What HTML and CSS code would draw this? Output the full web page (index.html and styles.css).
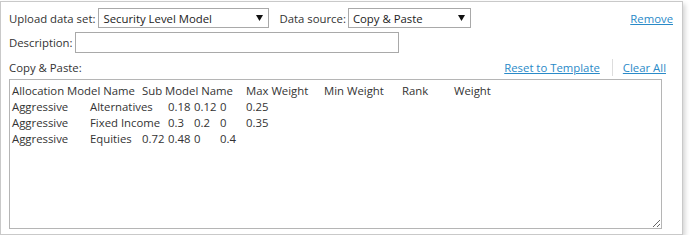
FILE: index.html
```html
<!DOCTYPE html>
<html>
<head>
<meta charset="utf-8">
<link rel="stylesheet" href="styles.css">
</head>
<body>
<div class="panel">
  <div class="row row1">
    <span class="label">Upload data set:</span>
    <div class="select sel1"><span class="sel-text">Security Level Model</span><svg class="arrow" width="7" height="6" viewBox="0 0 7 6"><path d="M0 0H7L3.5 6Z" fill="#111"/></svg></div>
    <span class="label lbl2">Data source:</span>
    <div class="select sel2"><span class="sel-text">Copy &amp; Paste</span><svg class="arrow" width="7" height="6" viewBox="0 0 7 6"><path d="M0 0H7L3.5 6Z" fill="#111"/></svg></div>
    <a class="link remove" href="#">Remove</a>
  </div>
  <div class="row row2">
    <span class="label">Description:</span>
    <div class="input"></div>
  </div>
  <div class="row row3">
    <span class="label">Copy &amp; Paste:</span>
    <div class="actions">
      <a class="link" href="#">Reset to Template</a>
      <span class="sep"></span>
      <a class="link" href="#">Clear All</a>
    </div>
  </div>
  <div class="textarea">
    <div class="line">
      <span class="s0">Allocation Model Name</span><span class="s5">Sub Model Name</span><span class="s9">Max Weight</span><span class="s12">Min Weight</span><span class="s15">Rank</span><span class="s17">Weight</span>
    </div>
    <div class="line">
      <span class="s0">Aggressive</span><span class="s3">Alternatives</span><span class="s6">0.18</span><span class="s7">0.12</span><span class="s8">0</span><span class="s9">0.25</span>
    </div>
    <div class="line">
      <span class="s0">Aggressive</span><span class="s3">Fixed Income</span><span class="s6">0.3</span><span class="s7">0.2</span><span class="s8">0</span><span class="s9">0.35</span>
    </div>
    <div class="line">
      <span class="s0">Aggressive</span><span class="s3">Equities</span><span class="s5">0.72</span><span class="s6">0.48</span><span class="s7">0</span><span class="s8">0.4</span>
    </div>
  </div>
</div>
</body>
</html>
```

FILE: styles.css
```css
* { box-sizing: border-box; }
html, body { margin: 0; padding: 0; background: #fff; }
body {
  font-family: "Open Sans", "Noto Sans", sans-serif;
  font-size: 11.35px;
  color: #333;
}
.panel {
  margin-top: 1px;
  width: 683px;
  height: 234px;
  border: 1px solid #c9c9c9;
  box-shadow: 2px 3px 5px rgba(0,0,0,0.18);
  padding: 6px 9px 4px 8px;
}
.row { display: flex; align-items: center; }
.row1 { height: 20px; }
.row2 { height: 21px; margin-top: 4px; }
.row3 { height: 20px; margin-top: 4px; }
.label { white-space: nowrap; }
.select {
  display: flex;
  align-items: center;
  height: 20px;
  border: 1px solid #a9a9a9;
  background: #fff;
  padding: 0 5px 0 4px;
  margin-left: 3px;
}
.sel1 { width: 171px; }
.sel2 { width: 123px; margin-left: 2px; }
.sel-text { flex: 1; color: #222; white-space: nowrap; }
.arrow { display: block; }
.lbl2 { margin-left: 10px; }
.link { color: #2a8ac8; text-decoration: underline; white-space: nowrap; }
.remove { margin-left: auto; }
.input {
  width: 324px;
  height: 21px;
  border: 1px solid #a9a9a9;
  margin-left: 2px;
}
.actions { margin-left: auto; display: flex; align-items: center; margin-right: 7px; }
.sep { width: 1px; height: 17px; background: #ddd; margin: 0 10px 0 12px; }
.textarea {
  margin-top: 2px;
  width: 653px;
  height: 150px;
  border: 1px solid #b5b5b5;
  padding: 3px 2px;
  overflow: auto;
  resize: both;
  line-height: 16px;
  color: #333;
}
.line {
  display: grid;
  grid-template-columns: repeat(24, 26px);
  white-space: nowrap;
}
.line span { grid-row: 1; }
.s0 { grid-column-start: 1; }
.s3 { grid-column-start: 4; }
.s5 { grid-column-start: 6; }
.s6 { grid-column-start: 7; }
.s7 { grid-column-start: 8; }
.s8 { grid-column-start: 9; }
.s9 { grid-column-start: 10; }
.s12 { grid-column-start: 13; }
.s15 { grid-column-start: 16; }
.s17 { grid-column-start: 18; }
```
